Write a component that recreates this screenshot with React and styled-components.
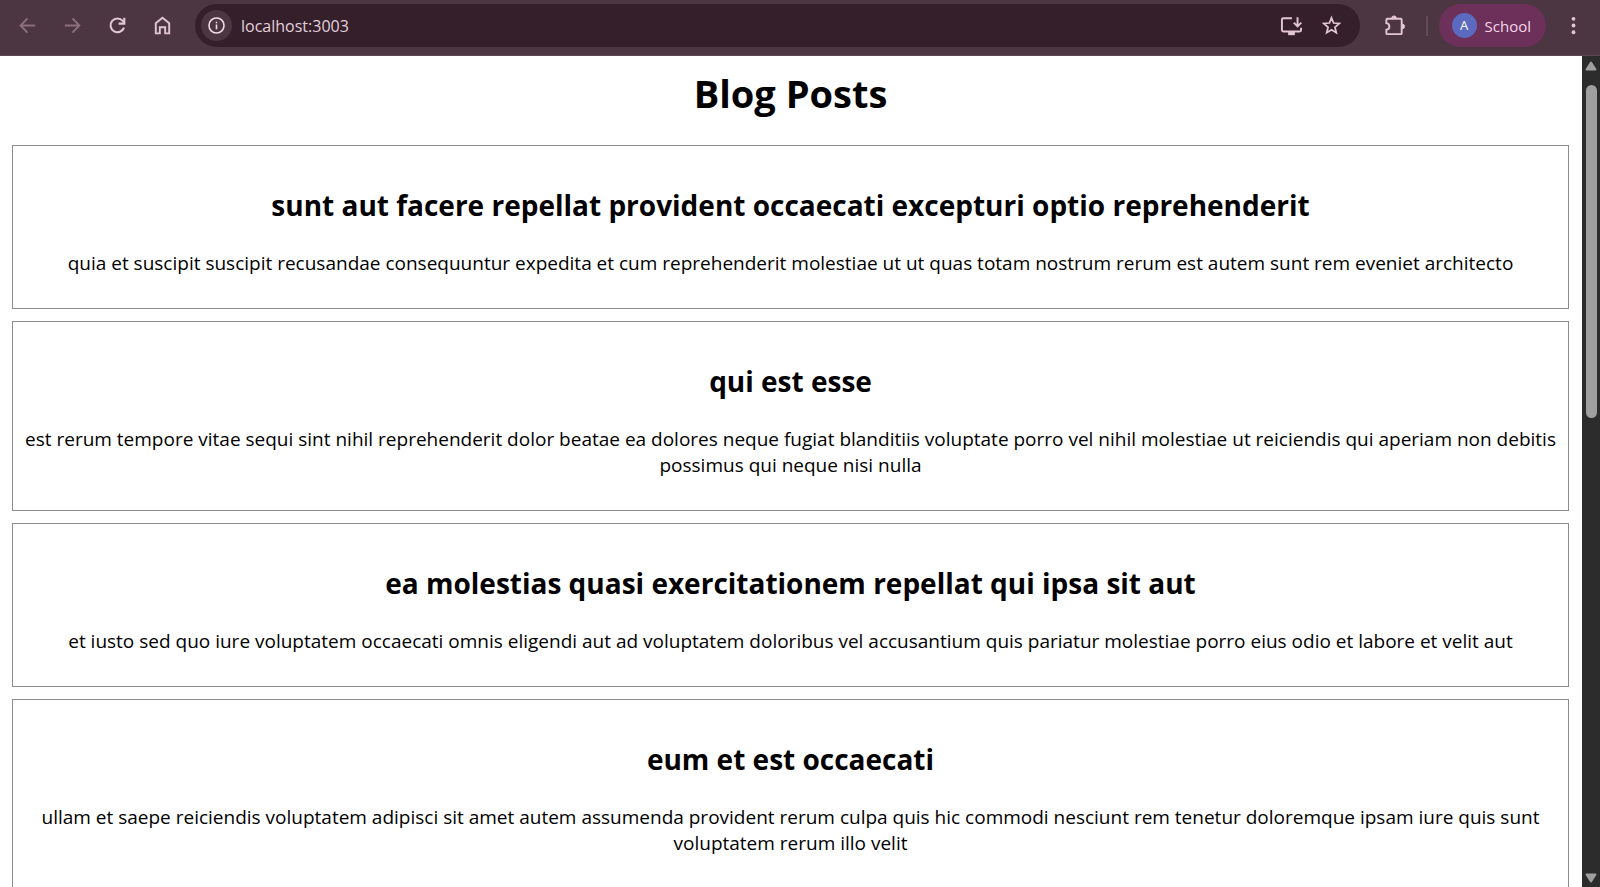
import React from "react";
import styled, { createGlobalStyle } from "styled-components";

const GlobalStyle = createGlobalStyle`
  * { box-sizing: border-box; }
  body {
    margin: 0;
    background: #fff;
    color: #000;
    font-family: "Open Sans", "Noto Sans", sans-serif;
  }
`;

const Window = styled.div`
  display: flex;
  flex-direction: column;
  height: 100vh;
  overflow: hidden;
`;

const Toolbar = styled.header`
  display: flex;
  align-items: center;
  flex-shrink: 0;
  gap: 16px;
  padding: 4px 10px 8px 11px;
  background: #4c3641;
  border-bottom: 1px solid #5c4851;
`;

const ButtonGroup = styled.nav`
  display: flex;
  gap: 12px;
`;

const IconButton = styled.button`
  display: flex;
  align-items: center;
  justify-content: center;
  width: 33px;
  height: 33px;
  padding: 0;
  border: 0;
  border-radius: 50%;
  background: transparent;
  color: ${(p) => (p.disabled ? "#8b6f7e" : "#e3c6d6")};
`;

const AddressBar = styled.form`
  display: flex;
  align-items: center;
  flex: 1;
  height: 43px;
  padding: 0 12px 0 6px;
  gap: 7px;
  border-radius: 22px;
  background: #351f2b;
`;

const SiteInfo = styled(IconButton)`
  width: 31px;
  height: 31px;
  background: #4c3641;
  color: #eedde6;
`;

const AddressInput = styled.input`
  flex: 1;
  min-width: 0;
  padding: 0 0 0 2px;
  border: 0;
  outline: 0;
  background: transparent;
  color: #e2d0da;
  font: 16px/24px "Open Sans", "Noto Sans", sans-serif;
`;

const Actions = styled.div`
  display: flex;
  align-items: center;
  gap: 11px;
  margin-left: 2px;
`;

const Divider = styled.span`
  width: 2px;
  height: 20px;
  margin-left: 4px;
  background: #634c58;
`;

const Profile = styled.button`
  display: flex;
  align-items: center;
  gap: 8px;
  height: 43px;
  padding: 0 15px 0 13px;
  border: 0;
  border-radius: 22px;
  background: #6c305b;
  color: #f7d6ea;
  font: 15px/22px "Open Sans", "Noto Sans", sans-serif;
`;

const Avatar = styled.span`
  width: 25px;
  height: 25px;
  border-radius: 50%;
  background: #5b6abf;
  color: #fff;
  font-size: 13px;
  line-height: 25px;
  text-align: center;
`;

const Viewport = styled.div`
  display: flex;
  flex: 1;
  min-height: 0;
`;

const Page = styled.main`
  flex: 1;
  min-width: 0;
  overflow: hidden;
  padding: 10px 13px 0 12px;
  text-align: center;
`;

const PageTitle = styled.h1`
  margin: 0 0 25px;
  font-size: 38px;
  font-weight: 700;
  line-height: 54px;
`;

const Post = styled.article`
  margin-bottom: 12px;
  padding: 39px 8px 32px;
  border: 1px solid #8c8c8c;
`;

const PostTitle = styled.h2`
  margin: 0 0 25px;
  font-size: 28px;
  font-weight: 700;
  line-height: 40px;
`;

const PostBody = styled.p`
  margin: 0;
  font-size: 19px;
  line-height: 26px;
`;

const Scrollbar = styled.div`
  display: flex;
  flex-direction: column;
  align-items: center;
  justify-content: space-between;
  width: 18px;
  padding: 5px 0 4px;
  background: #2c2c2c;
`;

const Track = styled.div`
  flex: 1;
  padding: 14px 0;
`;

const Thumb = styled.div`
  width: 11px;
  height: 43%;
  border-radius: 6px;
  background: #9f9f9f;
`;

const stroke = { fill: "none", stroke: "currentColor", strokeWidth: 2 };

function Icon({ children, size = 23 }) {
  return (
    <svg width={size} height={size} viewBox="0 0 24 24" aria-hidden="true" {...stroke}>
      {children}
    </svg>
  );
}

function ScrollArrow({ down }) {
  return (
    <svg width="12" height="10" viewBox="0 0 12 10" aria-hidden="true">
      <path
        d={down ? "M1.5 1.5h9L6 8.5z" : "M1.5 8.5h9L6 1.5z"}
        fill="#9f9f9f"
        stroke="#9f9f9f"
        strokeWidth="2"
        strokeLinejoin="round"
      />
    </svg>
  );
}

const posts = [
  {
    title: "sunt aut facere repellat provident occaecati excepturi optio reprehenderit",
    body: "quia et suscipit suscipit recusandae consequuntur expedita et cum reprehenderit molestiae ut ut quas totam nostrum rerum est autem sunt rem eveniet architecto",
  },
  {
    title: "qui est esse",
    body: "est rerum tempore vitae sequi sint nihil reprehenderit dolor beatae ea dolores neque fugiat blanditiis voluptate porro vel nihil molestiae ut reiciendis qui aperiam non debitis possimus qui neque nisi nulla",
  },
  {
    title: "ea molestias quasi exercitationem repellat qui ipsa sit aut",
    body: "et iusto sed quo iure voluptatem occaecati omnis eligendi aut ad voluptatem doloribus vel accusantium quis pariatur molestiae porro eius odio et labore et velit aut",
  },
  {
    title: "eum et est occaecati",
    body: "ullam et saepe reiciendis voluptatem adipisci sit amet autem assumenda provident rerum culpa quis hic commodi nesciunt rem tenetur doloremque ipsam iure quis sunt voluptatem rerum illo velit",
  },
];

export default function App() {
  return (
    <Window>
      <GlobalStyle />
      <Toolbar>
        <ButtonGroup aria-label="Navigation">
          <IconButton type="button" aria-label="Back" disabled>
            <Icon><path d="M20 12H5M12 4.5L4.8 12l7.2 7.5" /></Icon>
          </IconButton>
          <IconButton type="button" aria-label="Forward" disabled>
            <Icon><path d="M4 12h15M12 4.5l7.2 7.5-7.2 7.5" /></Icon>
          </IconButton>
          <IconButton type="button" aria-label="Reload">
            <Icon>
              <path d="M18.8 14.2A7.2 7.2 0 1 1 17.5 7.2L19 9" strokeWidth="2.2" />
              <path d="M19.1 4v6h-6" strokeWidth="2.2" />
            </Icon>
          </IconButton>
          <IconButton type="button" aria-label="Home">
            <Icon><path d="M5 20.2V9.600l7-5.600 7 5.600v10.600h-4.200v-6.400H9.200v6.400z" /></Icon>
          </IconButton>
        </ButtonGroup>

        <AddressBar onSubmit={(e) => e.preventDefault()}>
          <SiteInfo type="button" aria-label="View site information">
            <Icon size={19}>
              <circle cx="12" cy="12" r="9.5" />
              <path d="M12 10.8v5.8M12 7.2v2.1" />
            </Icon>
          </SiteInfo>
          <AddressInput aria-label="Address" defaultValue="localhost:3003" spellCheck={false} />
          <IconButton type="button" aria-label="Install app">
            <Icon>
              <path d="M12.5 4.4H3.4Q2 4.4 2 5.8v11Q2 18.2 3.4 18.2h17.2q1.4 0 1.4-1.4v-2.4" />
              <path d="M18.3 3.4v9M14.4 9l3.900 3.900L22.200 9" />
              <path d="M8.5 20.4h7" strokeWidth="3.4" />
            </Icon>
          </IconButton>
          <IconButton type="button" aria-label="Bookmark this page">
            <Icon>
              <path d="M12 4l2.200 5.400 5.900.5-4.500 3.900 1.400 5.700-5-3.100-5 3.100 1.400-5.700-4.500-3.900 5.900-.5z" strokeWidth="1.8" />
            </Icon>
          </IconButton>
        </AddressBar>

        <Actions>
          <IconButton type="button" aria-label="Extensions">
            <Icon>
              <path d="M4.500 5h14q1 0 1 1v14q0 1-1 1h-14q-1 0-1-1v-3.500c4.200-.6 4.200-6.400 0-7V6q0-1 1-1z" />
              <path d="M9 4.500a2.500 2.500 0 0 1 5 0zM20 10.500a2.500 2.500 0 0 1 0 5z" fill="currentColor" strokeWidth="1" />
            </Icon>
          </IconButton>
          <Divider />
          <Profile type="button">
            <Avatar>A</Avatar>
            School
          </Profile>
          <IconButton type="button" aria-label="Menu">
            <Icon>
              <g fill="currentColor" stroke="none">
                <circle cx="12" cy="5" r="2" />
                <circle cx="12" cy="12" r="2" />
                <circle cx="12" cy="19" r="2" />
              </g>
            </Icon>
          </IconButton>
        </Actions>
      </Toolbar>

      <Viewport>
        <Page>
          <PageTitle>Blog Posts</PageTitle>
          {posts.map((post) => (
            <Post key={post.title}>
              <PostTitle>{post.title}</PostTitle>
              <PostBody>{post.body}</PostBody>
            </Post>
          ))}
        </Page>
        <Scrollbar aria-hidden="true">
          <ScrollArrow />
          <Track>
            <Thumb />
          </Track>
          <ScrollArrow down />
        </Scrollbar>
      </Viewport>
    </Window>
  );
}
